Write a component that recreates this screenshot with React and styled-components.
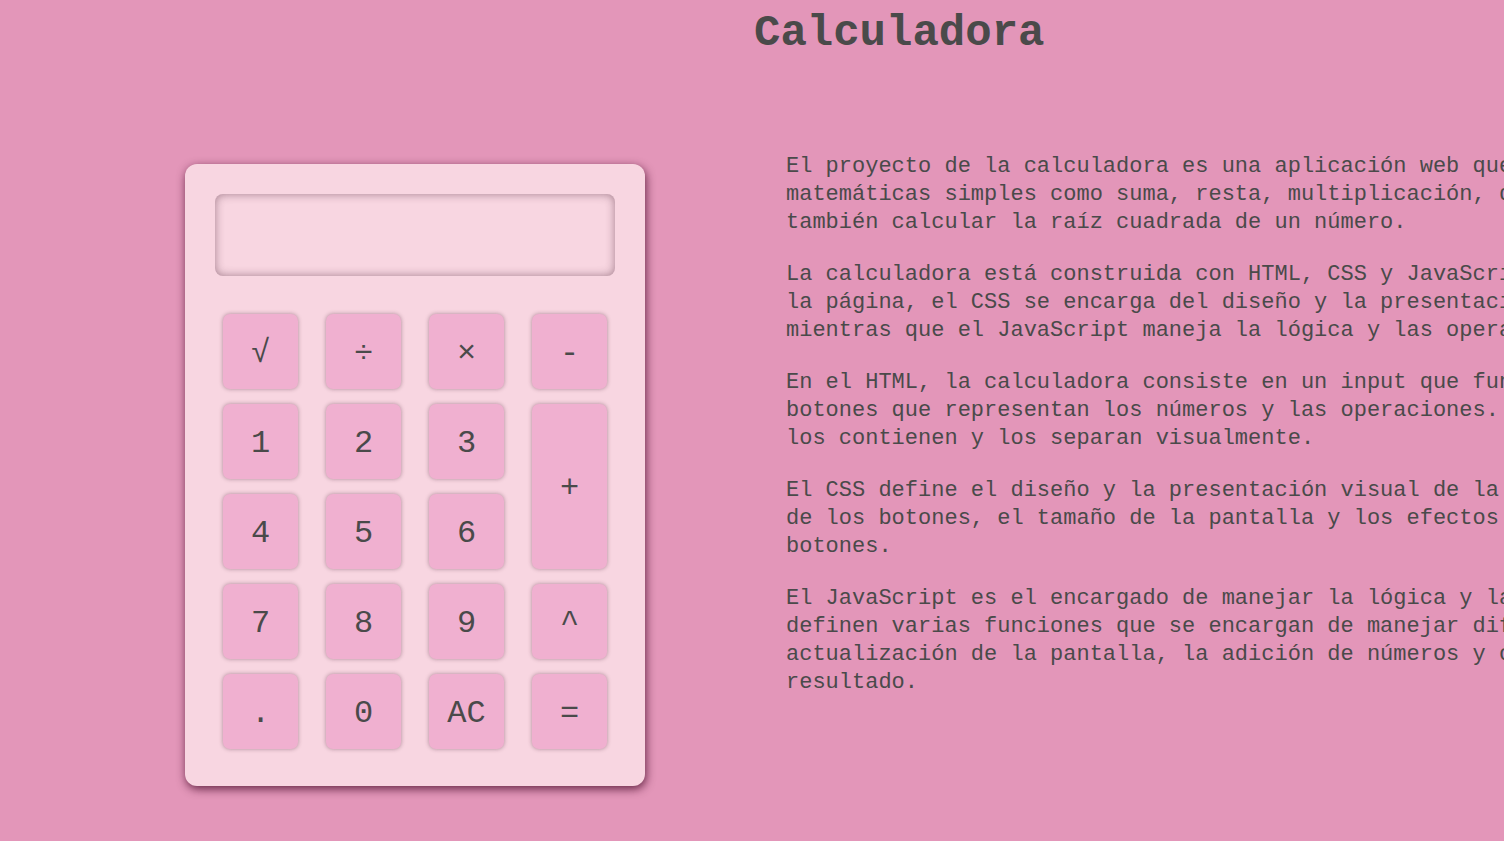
import React, { useState } from 'react';
import styled, { createGlobalStyle } from 'styled-components';

const GlobalStyle = createGlobalStyle`
  html, body {
    margin: 0;
    padding: 0;
    background: #e396b9;
    overflow: hidden;
  }
  body {
    font-family: 'Liberation Mono', 'DejaVu Sans Mono', monospace;
    color: #4a4a4a;
  }
`;

const Page = styled.div`
  display: flex;
  width: 1504px;
  height: 841px;
`;

const LeftColumn = styled.div`
  flex: 0 0 754px;
  box-sizing: border-box;
  padding: 164px 0 0 185px;
`;

const RightColumn = styled.div`
  flex: 1;
  min-width: 0;
`;

const Title = styled.h1`
  margin: 11px 0 0;
  font-size: 44px;
  line-height: 44px;
  font-weight: bold;
  color: #4a4a4a;
`;

const Description = styled.div`
  padding: 98px 0 0 32px;
  white-space: nowrap;
`;

const Paragraph = styled.p`
  margin: 0 0 24px;
  font-size: 22px;
  line-height: 28px;
`;

const Calculator = styled.div`
  width: 460px;
  height: 622px;
  box-sizing: border-box;
  padding: 30px;
  background: #f8d6e1;
  border-radius: 12px;
  box-shadow: 1px 3px 10px rgba(70, 10, 40, 0.8);
`;

const Display = styled.div`
  height: 82px;
  border-radius: 8px;
  background: #f8d6e1;
  box-shadow: inset 0 0 10px rgba(60, 20, 40, 0.45);
  font-size: 32px;
  line-height: 82px;
  text-align: right;
  padding: 0 14px;
`;

const Keys = styled.div`
  display: grid;
  grid-template-columns: repeat(4, 75px);
  grid-auto-rows: 75px;
  column-gap: 28px;
  row-gap: 15px;
  justify-content: center;
  margin-top: 38px;
`;

const Key = styled.button`
  grid-row: ${(p) => (p.$tall ? 'span 2' : 'auto')};
  border: none;
  border-radius: 7px;
  background: #f0b0d0;
  box-shadow: 0 0 4px rgba(60, 20, 40, 0.4);
  font-family: 'Liberation Mono', 'DejaVu Sans Mono', monospace;
  font-size: 32px;
  color: #4a4a4a;
  cursor: pointer;
  padding: 4px 0 0;
`;

const keys = [
  ['√'], ['÷'], ['×'], ['-'],
  ['1'], ['2'], ['3'], ['+', true],
  ['4'], ['5'], ['6'],
  ['7'], ['8'], ['9'], ['^'],
  ['.'], ['0'], ['AC'], ['='],
];

const paragraphs = [
  [
    'El proyecto de la calculadora es una aplicación web que permite realizar operaciones',
    'matemáticas simples como suma, resta, multiplicación, división y potencia, y',
    'también calcular la raíz cuadrada de un número.',
  ],
  [
    'La calculadora está construida con HTML, CSS y JavaScript. El HTML define la estructura de',
    'la página, el CSS se encarga del diseño y la presentación visual de los elementos,',
    'mientras que el JavaScript maneja la lógica y las operaciones matemáticas.',
  ],
  [
    'En el HTML, la calculadora consiste en un input que funciona como pantalla y una serie de',
    'botones que representan los números y las operaciones. Los botones están dentro de divs que',
    'los contienen y los separan visualmente.',
  ],
  [
    'El CSS define el diseño y la presentación visual de la calculadora, incluyendo los colores',
    'de los botones, el tamaño de la pantalla y los efectos de sombra de la calculadora y los',
    'botones.',
  ],
  [
    'El JavaScript es el encargado de manejar la lógica y las operaciones de la calculadora. Se',
    'definen varias funciones que se encargan de manejar diferentes aspectos, como la',
    'actualización de la pantalla, la adición de números y operadores, y el cálculo del',
    'resultado.',
  ],
];

function App() {
  const [value, setValue] = useState('');

  const press = (k) => {
    if (k === 'AC') return setValue('');
    if (k === '=') {
      try {
        const expr = value.replace(/×/g, '*').replace(/÷/g, '/').replace(/\^/g, '**');
        // eslint-disable-next-line no-new-func
        setValue(String(Function(`return (${expr})`)()));
      } catch (e) {
        setValue('Error');
      }
      return;
    }
    if (k === '√') {
      const n = parseFloat(value);
      setValue(isNaN(n) ? '' : String(Math.sqrt(n)));
      return;
    }
    setValue(value + k);
  };

  return (
    <>
      <GlobalStyle />
      <Page>
        <LeftColumn>
          <Calculator>
            <Display>{value}</Display>
            <Keys>
              {keys.map(([k, tall]) => (
                <Key key={k} $tall={tall} onClick={() => press(k)}>
                  {k}
                </Key>
              ))}
            </Keys>
          </Calculator>
        </LeftColumn>
        <RightColumn>
          <Title>Calculadora</Title>
          <Description>
            {paragraphs.map((lines, i) => (
              <Paragraph key={i}>
                {lines.map((line, j) => (
                  <React.Fragment key={j}>
                    {line}
                    {j < lines.length - 1 && <br />}
                  </React.Fragment>
                ))}
              </Paragraph>
            ))}
          </Description>
        </RightColumn>
      </Page>
    </>
  );
}

export default App;
